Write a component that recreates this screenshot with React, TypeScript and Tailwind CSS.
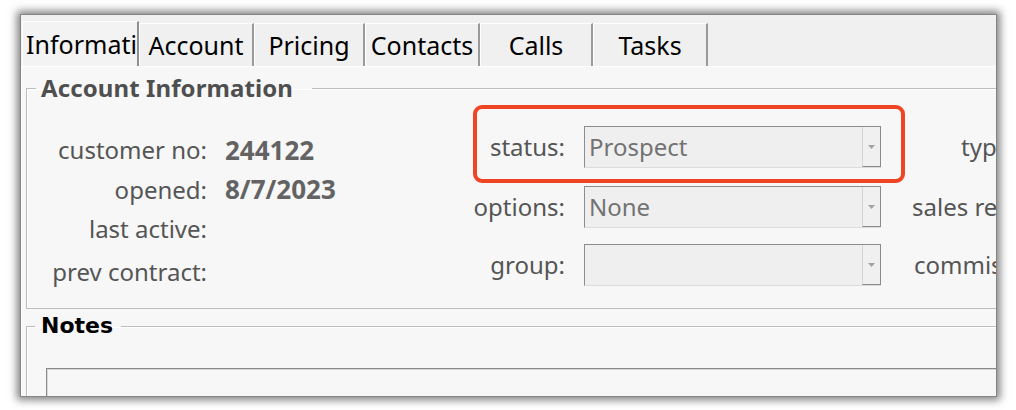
import React from 'react';

const tabs = [
  { label: 'Informati', w: 'w-[117px]', selected: true },
  { label: 'Account', w: 'w-[115px]', selected: false },
  { label: 'Pricing', w: 'w-[111px]', selected: false },
  { label: 'Contacts', w: 'w-[115px]', selected: false },
  { label: 'Calls', w: 'w-[113px]', selected: false },
  { label: 'Tasks', w: 'w-[115px]', selected: false },
];

const leftRows = [
  { label: 'customer no:', value: '244122', row: 'h-[40px]' },
  { label: 'opened:', value: '8/7/2023', row: 'h-[39px]' },
  { label: 'last active:', value: '', row: 'h-[40px]' },
  { label: 'prev contract:', value: '', row: 'h-[40px] mt-[3px]' },
];

function Combo({ value }: { value: string }) {
  return (
    <div className="flex h-[42px] w-[297px] border-l border-t border-[#8d8d8d] border-b border-b-[#dcdcdc] bg-[#efefef]">
      <div className="flex-1 pl-[4px] text-[24px] leading-[40px] text-[#737373]">{value}</div>
      <div className="flex w-[19px] items-center justify-center border-l border-[#d6d6d6] border-r border-r-[#8a8a8a] border-b border-b-[#8a8a8a] bg-[#f0f0f0]">
        <svg width="7" height="4" viewBox="0 0 7 4">
          <path d="M0 0h7L3.5 4z" fill="#a3a3a3" />
        </svg>
      </div>
    </div>
  );
}

export default function App() {
  return (
    <div className="h-[410px] w-[1016px] overflow-hidden bg-white pl-[20px] pt-[14px] font-['Noto_Sans',sans-serif]">
      <div className="flex h-[383px] w-[977px] flex-col overflow-hidden border border-[#858585] bg-[#f0f0f0] shadow-[0_0_8px_3px_rgba(0,0,0,0.5)]">
        {/* tab strip */}
        <div className="flex h-[51px] shrink-0 items-end pl-[1px]">
          {tabs.map((t) => (
            <div
              key={t.label}
              className={
                t.selected
                  ? `${t.w} flex h-[45px] items-center justify-center overflow-hidden border-l border-t border-white border-r-2 border-r-[#8e8e8e] bg-[#f3f3f3] pl-[3px] pt-[2px] text-[25px] text-black`
                  : `${t.w} flex h-[43px] items-center justify-center overflow-hidden border-l border-t border-white border-r-2 border-r-[#9a9a9a] bg-[#f0f0f0] pt-[2px] text-[25px] text-black`
              }
            >
              {t.label}
            </div>
          ))}
        </div>

        {/* page */}
        <div className="flex-1 overflow-hidden border-l border-t border-white bg-[#f7f7f7] pl-[4px]">
          <fieldset className="mt-[6px] h-[236px] w-[1000px] border border-[#bdbdbd] shadow-[inset_1px_1px_0_#ffffff]">
            <legend className="ml-[9px] pl-[5px] pr-[19px] text-[24px] font-bold leading-[30px] tracking-[0.1px] text-[#4f4f4f]">
              Account Information
            </legend>
            <div className="flex items-start">
              {/* left column */}
              <div className="mt-[27px] w-[400px]">
                {leftRows.map((r) => (
                  <div key={r.label} className={`flex items-center ${r.row}`}>
                    <div className="w-[180px] text-right text-[24px] text-[#555555]">{r.label}</div>
                    <div className="pl-[18px] text-[26px] font-bold text-[#636363]">{r.value}</div>
                  </div>
                ))}
              </div>

              {/* middle column */}
              <div className="mt-[23px] flex flex-col">
                <div className="relative flex items-center">
                  <div className="w-[138px] text-right text-[24px] text-[#555555]">status:</div>
                  <div className="ml-[19px]">
                    <Combo value="Prospect" />
                  </div>
                  <div className="pointer-events-none absolute -bottom-[15px] -right-[24px] -top-[21px] left-[46px] rounded-[9px] border-[4px] border-[#ef4524]" />
                </div>
                <div className="mt-[18px] flex items-center">
                  <div className="w-[138px] text-right text-[24px] text-[#555555]">options:</div>
                  <div className="ml-[19px]">
                    <Combo value="None" />
                  </div>
                </div>
                <div className="mt-[16px] flex items-center">
                  <div className="w-[138px] text-right text-[24px] text-[#555555]">group:</div>
                  <div className="ml-[19px]">
                    <Combo value="" />
                  </div>
                </div>
              </div>

              {/* right column, cut off by the window edge */}
              <div className="mt-[23px] flex flex-col text-[24px] text-[#555555]">
                <div className="flex h-[42px] items-center whitespace-nowrap pl-[80px]">type:</div>
                <div className="mt-[18px] flex h-[42px] items-center whitespace-nowrap pl-[31px]">sales rep:</div>
                <div className="mt-[16px] flex h-[42px] items-center whitespace-nowrap pl-[33px]">commission:</div>
              </div>
            </div>
          </fieldset>

          <fieldset className="mt-[2px] h-[120px] w-[1000px] border border-[#bdbdbd] shadow-[inset_1px_1px_0_#ffffff]">
            <legend className="ml-[8px] pl-[6px] pr-[8px] font-['DejaVu_Sans',sans-serif] text-[22px] font-bold leading-[30px] text-black">
              Notes
            </legend>
            <div className="ml-[19px] mt-[27px] h-[80px] w-[980px] border-l border-t border-[#8a8a8a] bg-[#f7f7f7] shadow-[inset_1px_1px_0_#d8d8d8]" />
          </fieldset>
        </div>
      </div>
    </div>
  );
}
